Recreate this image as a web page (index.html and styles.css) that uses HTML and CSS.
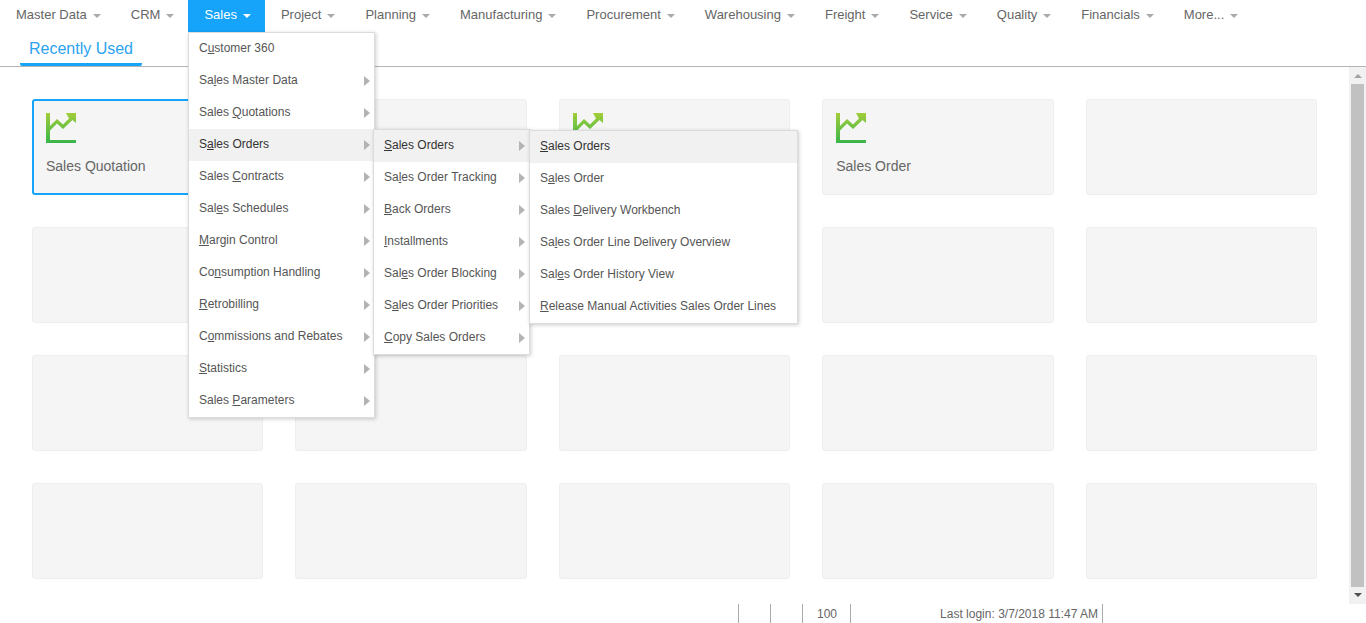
FILE: index.html
```html
<!DOCTYPE html>
<html lang="en">
<head>
<meta charset="UTF-8">
<title>Sales</title>
<link rel="stylesheet" href="styles.css">
</head>
<body>
<nav class="topnav">
    <a class="nav-item">Master Data<span class="caret"></span></a>
    <a class="nav-item">CRM<span class="caret"></span></a>
    <a class="nav-item active">Sales<span class="caret"></span></a>
    <a class="nav-item">Project<span class="caret"></span></a>
    <a class="nav-item">Planning<span class="caret"></span></a>
    <a class="nav-item">Manufacturing<span class="caret"></span></a>
    <a class="nav-item">Procurement<span class="caret"></span></a>
    <a class="nav-item">Warehousing<span class="caret"></span></a>
    <a class="nav-item">Freight<span class="caret"></span></a>
    <a class="nav-item">Service<span class="caret"></span></a>
    <a class="nav-item">Quality<span class="caret"></span></a>
    <a class="nav-item">Financials<span class="caret"></span></a>
    <a class="nav-item">More...<span class="caret"></span></a>
</nav>
<div class="tabs">
    <a class="tab">Recently Used</a>
</div>
<div class="content">
    <main class="tiles">
        <div class="tile selected">
            <svg class="tile-icon" viewBox="0 0 30 30"><use href="#chart"></use></svg>
            <span>Sales Quotation</span>
        </div>
        <div class="tile"></div>
        <div class="tile">
            <svg class="tile-icon" viewBox="0 0 30 30"><use href="#chart"></use></svg>
        </div>
        <div class="tile">
            <svg class="tile-icon" viewBox="0 0 30 30"><use href="#chart"></use></svg>
            <span>Sales Order</span>
        </div>
        <div class="tile"></div>
        <div class="tile"></div><div class="tile"></div><div class="tile"></div><div class="tile"></div><div class="tile"></div>
        <div class="tile"></div><div class="tile"></div><div class="tile"></div><div class="tile"></div><div class="tile"></div>
        <div class="tile"></div><div class="tile"></div><div class="tile"></div><div class="tile"></div><div class="tile"></div>
    </main>
    <div class="scrollbar">
        <span class="arrow-up"></span>
        <span class="thumb"></span>
        <span class="arrow-down"></span>
    </div>
</div>
<footer class="statusbar">
    <span class="cell"></span>
    <span class="cell"></span>
    <span class="cell count">100</span>
    <span class="cell login">Last login: 3/7/2018 11:47 AM</span>
</footer>

<ul class="menu menu-sales">
    <li>C<u>u</u>stomer 360</li>
    <li class="sub">Sa<u>l</u>es Master Data</li>
    <li class="sub">Sales <u>Q</u>uotations</li>
    <li class="sub open">S<u>a</u>les Orders</li>
    <li class="sub">Sales <u>C</u>ontracts</li>
    <li class="sub">Sal<u>e</u>s Schedules</li>
    <li class="sub"><u>M</u>argin Control</li>
    <li class="sub">Co<u>n</u>sumption Handling</li>
    <li class="sub"><u>R</u>etrobilling</li>
    <li class="sub">C<u>o</u>mmissions and Rebates</li>
    <li class="sub"><u>S</u>tatistics</li>
    <li class="sub">Sales <u>P</u>arameters</li>
</ul>
<ul class="menu menu-orders">
    <li class="sub open"><u>S</u>ales Orders</li>
    <li class="sub">Sa<u>l</u>es Order Tracking</li>
    <li class="sub"><u>B</u>ack Orders</li>
    <li class="sub"><u>I</u>nstallments</li>
    <li class="sub">Sal<u>e</u>s Order Blocking</li>
    <li class="sub">S<u>a</u>les Order Priorities</li>
    <li class="sub"><u>C</u>opy Sales Orders</li>
</ul>
<ul class="menu menu-leaf">
    <li class="open"><u>S</u>ales Orders</li>
    <li>S<u>a</u>les Order</li>
    <li>Sales <u>D</u>elivery Workbench</li>
    <li>Sa<u>l</u>es Order Line Delivery Overview</li>
    <li>Sal<u>e</u>s Order History View</li>
    <li><u>R</u>elease Manual Activities Sales Order Lines</li>
</ul>

<svg class="defs" width="0" height="0">
    <defs>
        <linearGradient id="chartFill" gradientUnits="userSpaceOnUse" x1="0" y1="0" x2="0" y2="30">
            <stop offset="0" stop-color="#a2cd39"></stop>
            <stop offset="1" stop-color="#39b54a"></stop>
        </linearGradient>
        <path id="chart" fill="url(#chartFill)" d="M0 0h4v13l7-7 6 5.500 6-6-3-5.500h10v10l-3.500-3-9.500 9-6-5.500-7 7V27h26v3H0z"></path>
    </defs>
</svg>
</body>
</html>
```

FILE: styles.css
```css
html, body {
    height: 100%;
}
body {
    margin: 0;
    display: flex;
    flex-direction: column;
    height: 623px;
    overflow: hidden;
    background-color: #fff;
    font-family: "Liberation Sans", Arial, sans-serif;
    color: #555;
}

/* top navigation */
.topnav {
    display: flex;
    height: 32px;
    font-size: 13px;
}
.nav-item {
    display: flex;
    align-items: center;
    padding: 0 14px 3px 16px;
    color: #666;
}
.nav-item.active {
    background-color: #15a4fa;
    color: #fff;
}
.caret {
    width: 0;
    height: 0;
    margin-left: 6px;
    margin-top: 2px;
    border-left: 4px solid transparent;
    border-right: 4px solid transparent;
    border-top: 4px solid #aaa;
}
.active .caret {
    border-top-color: #fff;
}

/* tab row */
.tabs {
    display: flex;
    height: 34px;
    padding-left: 20px;
    border-bottom: 1px solid #b5b5b5;
    box-sizing: content-box;
}
.tab {
    width: 122px;
    height: 31px;
    border-bottom: 3px solid #15a4fa;
    border-radius: 0 0 2px 2px;
    text-align: center;
    font-size: 16px;
    line-height: 33px;
    color: #2ba3f0;
}

/* tile grid */
.content {
    display: flex;
    flex: 1;
    min-height: 0;
}
.tiles {
    flex: 1;
    display: grid;
    grid-template-columns: repeat(5, 1fr);
    grid-auto-rows: 96px;
    gap: 32px;
    padding: 32px 32px 0;
}
.tile {
    box-sizing: border-box;
    padding: 13px 13px 0;
    background-color: #f5f5f5;
    border: 1px solid #eee;
    border-radius: 3px;
    font-size: 14px;
    color: #666;
}
.tile.selected {
    border: 2px solid #15a4fa;
    padding: 12px 12px 0;
}
.tile span {
    display: block;
    margin-top: 15px;
}
.tile-icon {
    display: block;
    width: 30px;
    height: 30px;
}
.defs {
    position: absolute;
}

/* scrollbar */
.scrollbar {
    display: flex;
    flex-direction: column;
    align-items: center;
    width: 17px;
    background-color: #f1f1f1;
}
.arrow-up, .arrow-down {
    width: 0;
    height: 0;
    border-left: 4px solid transparent;
    border-right: 4px solid transparent;
}
.arrow-up {
    margin: 7px 0 6px;
    border-bottom: 4px solid #a3a3a3;
}
.arrow-down {
    margin: 6px 0 7px;
    border-top: 4px solid #505050;
}
.thumb {
    flex: 1;
    width: 13px;
    background-color: #c1c1c1;
}

/* status bar */
.statusbar {
    display: flex;
    height: 19px;
    padding-left: 738px;
    font-size: 12px;
    line-height: 21px;
    color: #666;
}
.cell {
    box-sizing: border-box;
    width: 32px;
    border-left: 1px solid #aaa;
}
.count {
    width: 48px;
    padding-left: 14px;
}
.login {
    width: 253px;
    padding-right: 4px;
    border-right: 1px solid #aaa;
    text-align: right;
}

/* cascading menus */
.menu {
    position: absolute;
    margin: 0;
    padding: 0;
    list-style: none;
    background-color: #fff;
    border: 1px solid #dcdcdc;
    box-shadow: 1px 1px 4px rgba(0, 0, 0, 0.2);
    font-size: 12px;
    color: #555;
}
.menu li {
    position: relative;
    height: 32px;
    line-height: 30px;
    padding-left: 10px;
}
.menu li.open {
    background-color: #f1f1f1;
    color: #333;
}
.menu li.sub::after {
    content: "";
    position: absolute;
    right: 4px;
    top: 11px;
    border-top: 5px solid transparent;
    border-bottom: 5px solid transparent;
    border-left: 6px solid #b3b3b3;
}
.menu-sales {
    left: 188px;
    top: 32px;
    width: 185px;
}
.menu-orders {
    left: 373px;
    top: 129px;
    width: 155px;
}
.menu-leaf {
    left: 529px;
    top: 130px;
    width: 267px;
}
```
